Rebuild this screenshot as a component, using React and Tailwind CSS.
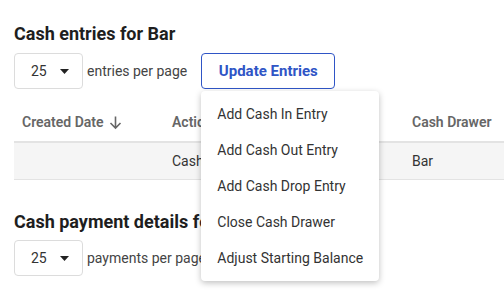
import React from 'react';

const menuItems = [
  'Add Cash In Entry',
  'Add Cash Out Entry',
  'Add Cash Drop Entry',
  'Close Cash Drawer',
  'Adjust Starting Balance',
];

const PageSizeSelect = () => (
  <div className="w-[69px] h-[36px] border border-[#dcdcdc] rounded-[4px] flex items-center pl-[16px] gap-[13px] text-[14px] text-[#333]">
    <span>25</span>
    <svg width="9" height="5" viewBox="0 0 9 5">
      <path d="M0 0h9L4.5 5z" fill="#222" />
    </svg>
  </div>
);

const App = () => {
  return (
    <div
      className="w-[504px] h-[303px] overflow-hidden bg-white relative"
      style={{ fontFamily: 'Roboto, "Liberation Sans", sans-serif' }}
    >
      <div className="pl-[14px] pt-[22px]">
        {/* Cash entries */}
        <h2 className="text-[18px] leading-[24px] font-bold text-[#1e1e1e]">Cash entries for Bar</h2>
        <div className="mt-[7px] flex items-center">
          <PageSizeSelect />
          <span className="ml-[4px] text-[14px] text-[#444]">entries per page</span>
          <div className="relative ml-[14px]">
            <button className="w-[134px] h-[36px] border border-[#2f55c6] rounded-[4px] text-[15px] font-bold text-[#2f55c6]">
              Update Entries
            </button>
            {/* Dropdown */}
            <div className="absolute left-0 top-[38px] w-[178px] z-10 bg-white rounded-[4px] py-[5px] shadow-[0_2px_6px_rgba(0,0,0,0.25)]">
              {menuItems.map((item) => (
                <div key={item} className="h-[36px] flex items-center pl-[16px] text-[14px] text-[#333]">
                  {item}
                </div>
              ))}
            </div>
          </div>
        </div>

        {/* Table */}
        <div className="mt-[15px] w-[520px] text-[14px]">
          <div className="h-[39px] flex items-center border-b-2 border-[#e3e3e3] font-semibold text-[#666]">
            <div className="w-[150px] pl-[8px] flex items-center gap-[4px]">
              Created Date
              <svg width="15" height="15" viewBox="0 0 15 15">
                <path d="M7.5 1.5v11.5M2.5 8 7.5 13l5-5" fill="none" stroke="#666" strokeWidth="1.6" />
              </svg>
            </div>
            <div className="w-[240px] pl-[8px]">Action</div>
            <div className="pl-[8px]">Cash Drawer</div>
          </div>
          <div className="h-[37px] flex items-center bg-[#f5f5f5] border-b border-[#e3e3e3] text-[#333]">
            <div className="w-[150px]" />
            <div className="w-[240px] pl-[8px]">Cash</div>
            <div className="pl-[8px]">Bar</div>
          </div>
        </div>

        {/* Cash payments */}
        <h2 className="mt-[30px] text-[18px] leading-[24px] font-bold text-[#1e1e1e] whitespace-nowrap">
          Cash payment details for Bar
        </h2>
        <div className="mt-[6px] flex items-center">
          <PageSizeSelect />
          <span className="ml-[4px] text-[14px] text-[#444]">payments per page</span>
        </div>
      </div>
    </div>
  );
};

export default App;
